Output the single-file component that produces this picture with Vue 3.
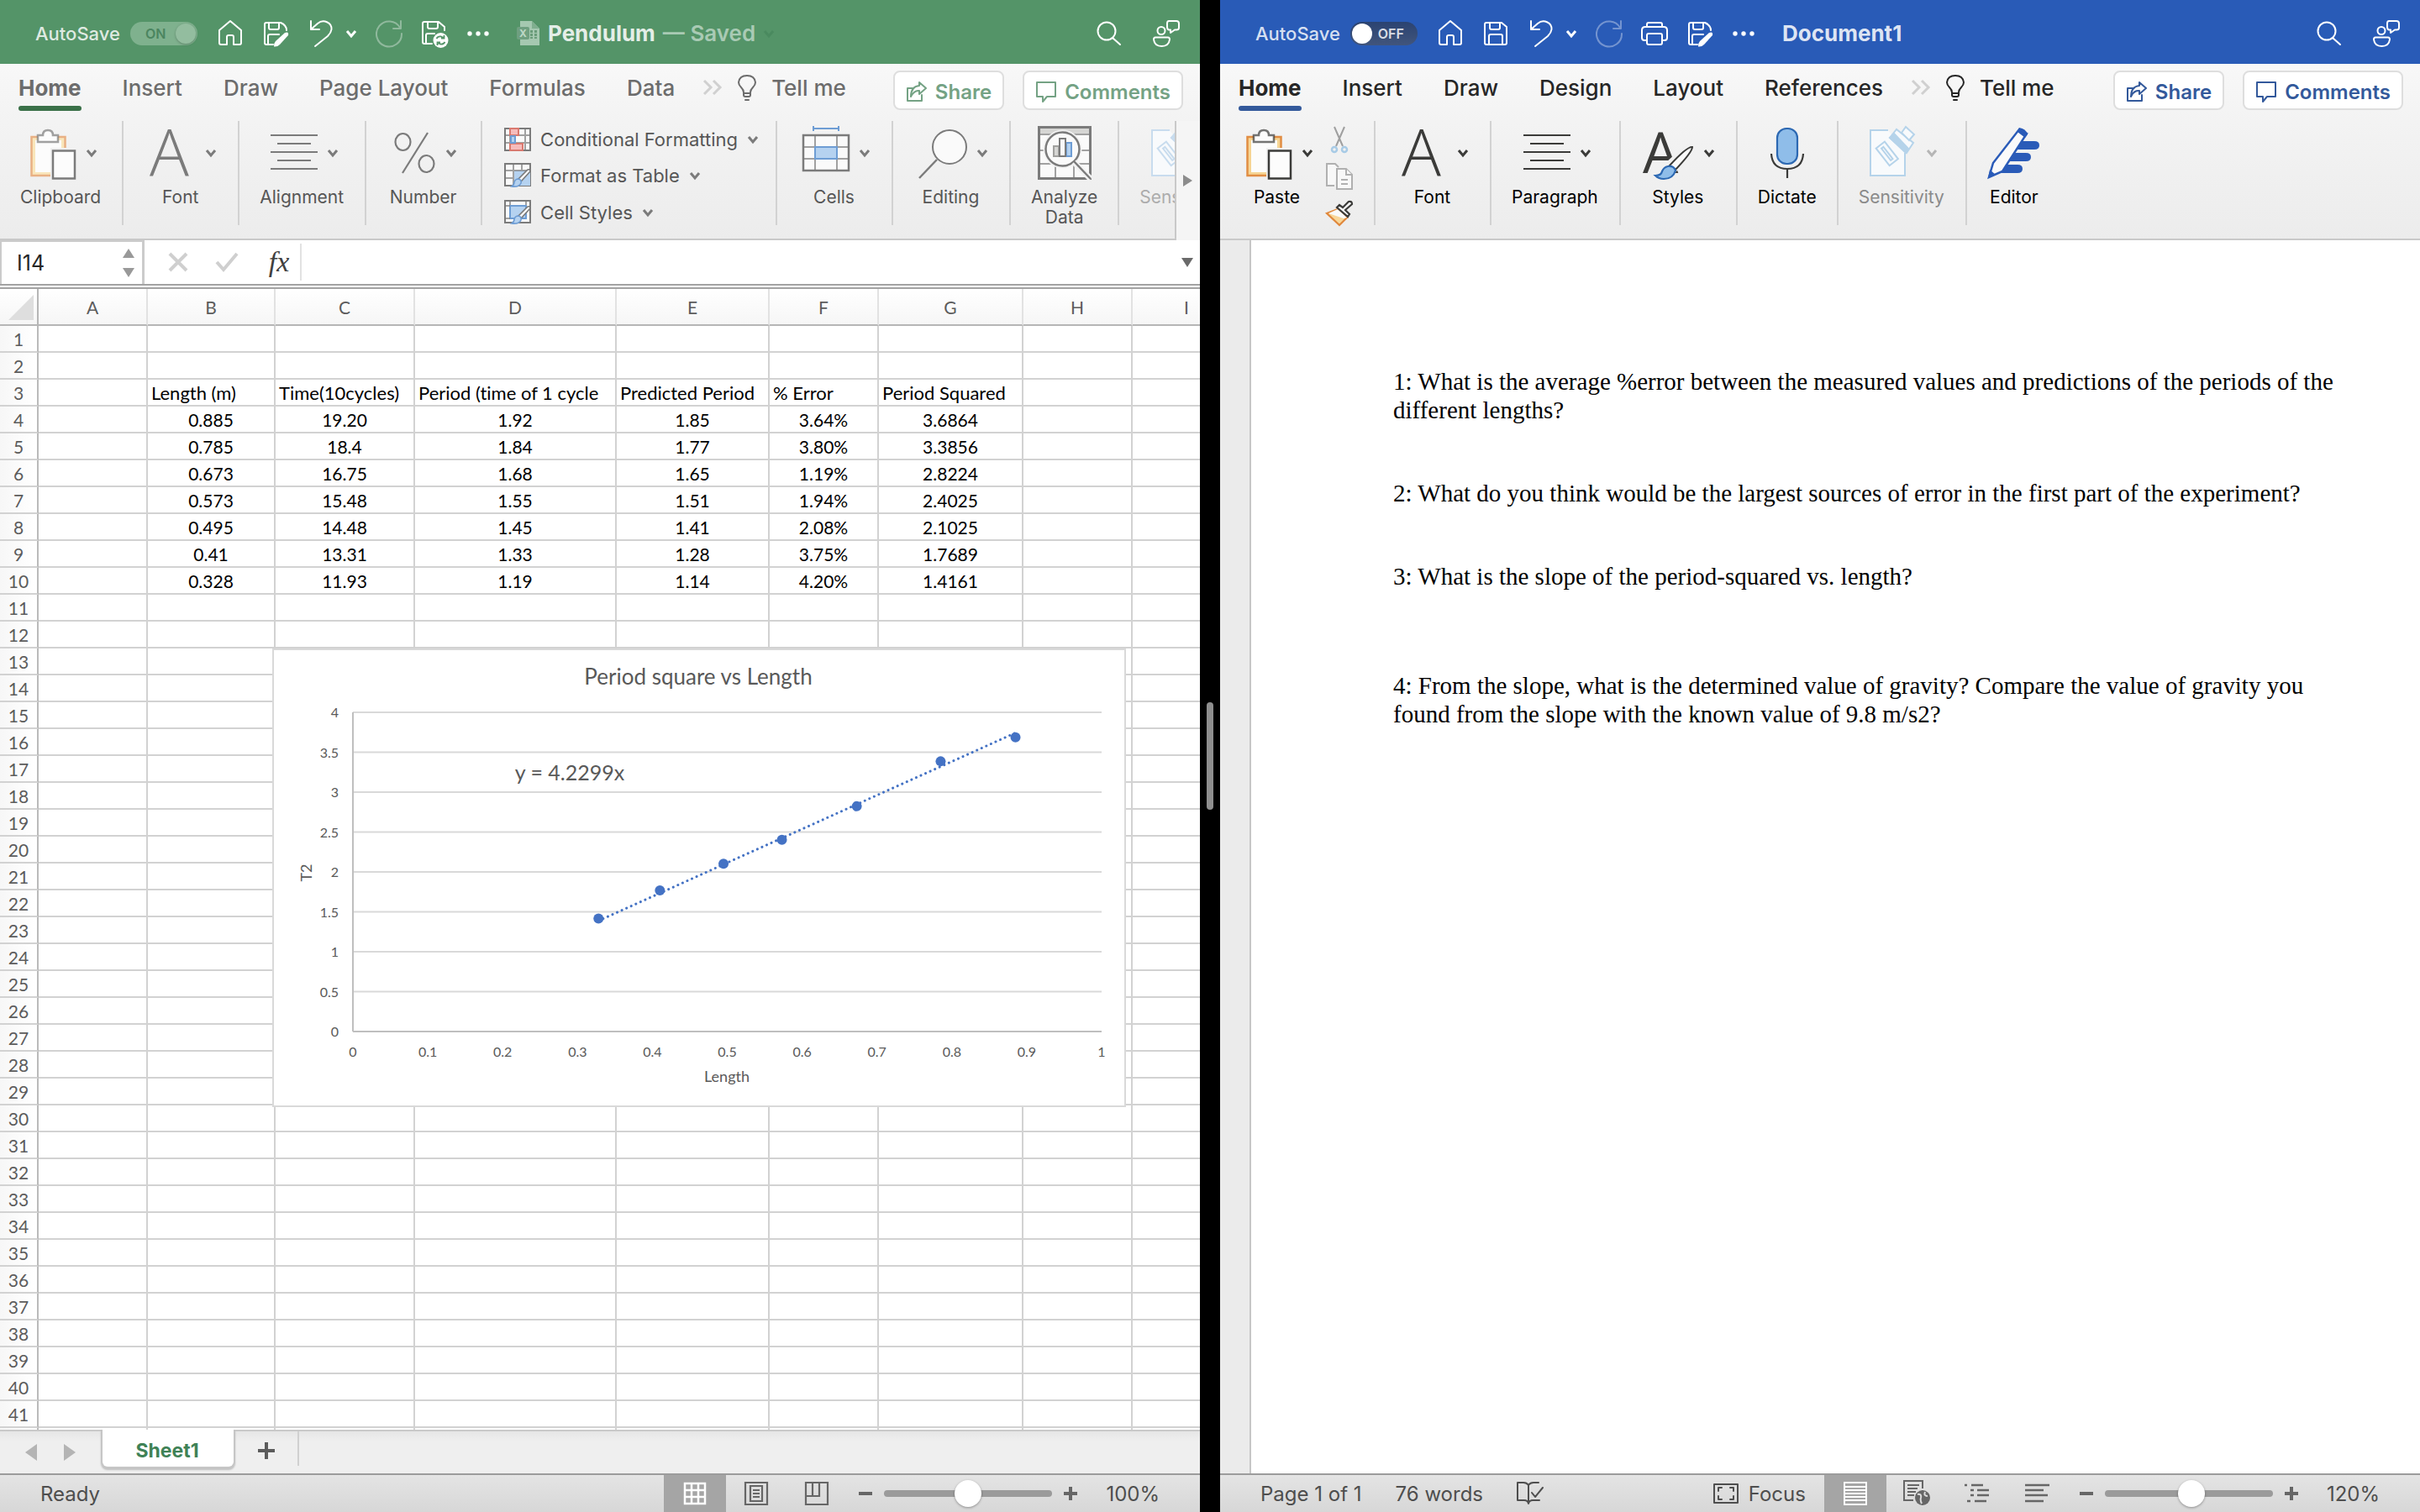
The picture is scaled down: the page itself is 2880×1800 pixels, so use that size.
<template>
  <main class="desktop">
    <!-- Spreadsheet window -->
    <section class="window excel">
      <header class="titlebar">
        <label class="autosave">
          <span>AutoSave</span>
          <input v-model="excelAutoSave" type="checkbox" role="switch">
          <span class="track on"><b>ON</b><i class="knob" /></span>
        </label>
        <div class="quick-tools">
          <button aria-label="Home"><Icon name="home" /></button>
          <button aria-label="Save as"><Icon name="saveEdit" /></button>
          <span class="undo-group">
            <button aria-label="Undo"><Icon name="undo" /></button>
            <button aria-label="Undo history"><Icon name="chevron" /></button>
          </span>
          <button class="faded" aria-label="Redo"><Icon name="redo" /></button>
          <button aria-label="Save and sync"><Icon name="saveSync" /></button>
          <button aria-label="More"><Icon name="dots" /></button>
        </div>
        <h1 class="doc-title">
          <Icon name="excelDoc" class="doc-icon" />
          <span>Pendulum</span>
          <span class="saved">— Saved</span>
          <Icon name="chevron" class="title-chevron" />
        </h1>
        <div class="title-actions">
          <button aria-label="Search"><Icon name="search" /></button>
          <button aria-label="Presence"><Icon name="presence" /></button>
        </div>
      </header>

      <nav class="tabs">
        <button v-for="tab in excelTabs" :key="tab" class="tab" :class="{ active: tab === 'Home' }">{{ tab }}</button>
        <button class="more-tabs" aria-label="More tabs"><Icon name="doubleChevron" /></button>
        <button class="tell-me"><Icon name="bulb" />Tell me</button>
        <div class="tab-actions">
          <button class="pill"><Icon name="share" />Share</button>
          <button class="pill"><Icon name="comment" />Comments</button>
        </div>
      </nav>

      <div class="ribbon">
        <div class="groups">
          <div v-for="g in excelGroupsLeft" :key="g.label" class="group">
            <button class="big">
              <span class="big-icon with-chevron"><Icon :name="g.icon" /><Icon name="chevron" /></span>
              <span class="big-label">{{ g.label }}</span>
            </button>
          </div>
          <div class="group commands">
            <button v-for="c in styleCommands" :key="c.label" class="command">
              <Icon :name="c.icon" />{{ c.label }}<Icon name="chevron" />
            </button>
          </div>
          <div v-for="g in excelGroupsRight" :key="g.label" class="group" :class="{ disabled: g.disabled, plain: !g.menu }">
            <button class="big" :disabled="g.disabled">
              <span class="big-icon" :class="{ 'with-chevron': g.menu }">
                <Icon :name="g.icon" /><Icon v-if="g.menu" name="chevron" />
              </span>
              <span class="big-label">{{ g.label }}</span>
            </button>
          </div>
        </div>
        <button class="ribbon-scroll" aria-label="Scroll ribbon"><Icon name="arrowRight" /></button>
      </div>

      <div class="formula-bar">
        <div class="name-box">
          <input v-model="cellName" aria-label="Name box">
          <span class="stepper">
            <button aria-label="Previous"><Icon name="stepUp" /></button>
            <button aria-label="Next"><Icon name="stepDown" /></button>
          </span>
        </div>
        <button class="formula-btn" aria-label="Cancel"><Icon name="cross" /></button>
        <button class="formula-btn" aria-label="Enter"><Icon name="check" /></button>
        <button class="fx" aria-label="Insert function">fx</button>
        <input class="formula-input" aria-label="Formula">
        <button class="expand" aria-label="Expand formula bar"><Icon name="stepDown" /></button>
      </div>

      <div class="sheet">
        <table class="grid">
          <colgroup>
            <col class="row-head-col">
            <col v-for="c in columns" :key="c.name" :style="{ width: c.width + 'px' }">
          </colgroup>
          <thead>
            <tr>
              <th class="corner"><Icon name="corner" /></th>
              <th v-for="c in columns" :key="c.name">{{ c.name }}</th>
            </tr>
          </thead>
          <tbody>
            <tr v-for="row in 41" :key="row">
              <th>{{ row }}</th>
              <td v-for="(c, i) in columns" :key="c.name" :class="{ text: row === 3 }">{{ cellText(row, i) }}</td>
            </tr>
            <tr>
              <th />
              <td v-for="c in columns" :key="c.name" />
            </tr>
          </tbody>
        </table>

        <figure class="chart">
          <svg width="1014" height="544" viewBox="0 0 1014 544" font-family="Lato, sans-serif" fill="#595959">
            <text x="506" y="42" font-size="26" text-anchor="middle">Period square vs Length</text>
            <g v-for="t in yTicks" :key="'y' + t">
              <line x1="95" x2="986" :y1="py(t)" :y2="py(t)" :stroke="t ? '#d9d9d9' : '#bfbfbf'" stroke-width="2" />
              <text x="78" :y="py(t) + 6" font-size="16" text-anchor="end">{{ t }}</text>
            </g>
            <line x1="95" x2="95" y1="75" y2="455" stroke="#bfbfbf" stroke-width="2" />
            <text v-for="t in xTicks" :key="'x' + t" :x="px(t)" y="485" font-size="16" text-anchor="middle">{{ t }}</text>
            <line
              :x1="px(0.328)" :y1="py(0.328 * 4.2299)" :x2="px(0.885)" :y2="py(0.885 * 4.2299)"
              stroke="#4472c4" stroke-width="3" stroke-linecap="round" stroke-dasharray="0.1 6"
            />
            <circle v-for="p in points" :key="p[0]" :cx="px(p[0])" :cy="py(p[1])" r="6" fill="#4472c4" />
            <text x="353" y="156" font-size="25" text-anchor="middle">y = 4.2299x</text>
            <text x="540" y="515" font-size="18" text-anchor="middle">Length</text>
            <text transform="translate(46 266) rotate(-90)" font-size="18" text-anchor="middle">T2</text>
          </svg>
        </figure>
      </div>

      <div class="sheet-tabs">
        <button class="sheet-arrow" aria-label="Previous sheet"><Icon name="sheetPrev" /></button>
        <button class="sheet-arrow" aria-label="Next sheet"><Icon name="sheetNext" /></button>
        <button class="sheet-tab">Sheet1</button>
        <button class="add-sheet" aria-label="Add sheet"><Icon name="addSheet" /></button>
      </div>

      <footer class="statusbar">
        <span>Ready</span>
        <div class="status-right">
          <button class="view active" aria-label="Normal view"><Icon name="viewNormal" /></button>
          <button class="view" aria-label="Page layout view"><Icon name="viewPage" /></button>
          <button class="view" aria-label="Page break view"><Icon name="viewBreak" /></button>
          <button class="zoom-btn" aria-label="Zoom out"><Icon name="minus" /></button>
          <input v-model="excelZoom" class="slider" type="range" min="0" max="100" aria-label="Zoom">
          <button class="zoom-btn" aria-label="Zoom in"><Icon name="plus" /></button>
          <output>100%</output>
        </div>
      </footer>
    </section>

    <div class="splitter"><span class="handle" /></div>

    <!-- Document window -->
    <section class="window word">
      <header class="titlebar">
        <label class="autosave">
          <span>AutoSave</span>
          <input v-model="wordAutoSave" type="checkbox" role="switch">
          <span class="track"><i class="knob" /><b>OFF</b></span>
        </label>
        <div class="quick-tools">
          <button aria-label="Home"><Icon name="home" /></button>
          <button aria-label="Save"><Icon name="save" /></button>
          <span class="undo-group">
            <button aria-label="Undo"><Icon name="undo" /></button>
            <button aria-label="Undo history"><Icon name="chevron" /></button>
          </span>
          <button class="faded" aria-label="Redo"><Icon name="redo" /></button>
          <button aria-label="Print"><Icon name="print" /></button>
          <button aria-label="Save as"><Icon name="saveEdit" /></button>
          <button aria-label="More"><Icon name="dots" /></button>
        </div>
        <h1 class="doc-title"><span>Document1</span></h1>
        <div class="title-actions">
          <button aria-label="Search"><Icon name="search" /></button>
          <button aria-label="Presence"><Icon name="presence" /></button>
        </div>
      </header>

      <nav class="tabs">
        <button v-for="tab in wordTabs" :key="tab" class="tab" :class="{ active: tab === 'Home' }">{{ tab }}</button>
        <button class="more-tabs" aria-label="More tabs"><Icon name="doubleChevron" /></button>
        <button class="tell-me"><Icon name="bulb" />Tell me</button>
        <div class="tab-actions">
          <button class="pill"><Icon name="share" />Share</button>
          <button class="pill"><Icon name="comment" />Comments</button>
        </div>
      </nav>

      <div class="ribbon">
        <div class="groups">
          <div class="group paste">
            <button class="big">
              <span class="big-icon with-chevron"><Icon name="clipboard" /><Icon name="chevron" /></span>
              <span class="big-label">Paste</span>
            </button>
            <div class="mini-tools">
              <button aria-label="Cut"><Icon name="cut" /></button>
              <button aria-label="Copy"><Icon name="copy" /></button>
              <button aria-label="Format painter"><Icon name="painter" /></button>
            </div>
          </div>
          <div v-for="g in wordGroups" :key="g.label" class="group" :class="{ disabled: g.disabled, plain: !g.menu }">
            <button class="big" :disabled="g.disabled">
              <span class="big-icon" :class="{ 'with-chevron': g.menu }">
                <Icon :name="g.icon" /><Icon v-if="g.menu" name="chevron" />
              </span>
              <span class="big-label">{{ g.label }}</span>
            </button>
          </div>
        </div>
      </div>

      <div class="canvas">
        <article class="page">
          <p>1: What is the average %error between the measured values and predictions of the periods of the different lengths?</p>
          <p>2: What do you think would be the largest sources of error in the first part of the experiment?</p>
          <p>3: What is the slope of the period-squared vs. length?</p>
          <p>4: From the slope, what is the determined value of gravity? Compare the value of gravity you found from the slope with the known value of 9.8 m/s2?</p>
        </article>
      </div>

      <footer class="statusbar">
        <span>Page 1 of 1</span>
        <span>76 words</span>
        <button class="proof" aria-label="Proofing"><Icon name="proof" /></button>
        <div class="status-right">
          <button class="focus"><Icon name="focus" />Focus</button>
          <button class="view active" aria-label="Print layout"><Icon name="viewPrint" /></button>
          <button class="view" aria-label="Web layout"><Icon name="viewWeb" /></button>
          <button class="view" aria-label="Outline"><Icon name="viewOutline" /></button>
          <button class="view" aria-label="Draft"><Icon name="viewDraft" /></button>
          <button class="zoom-btn" aria-label="Zoom out"><Icon name="minus" /></button>
          <input v-model="wordZoom" class="slider" type="range" min="0" max="100" aria-label="Zoom">
          <button class="zoom-btn" aria-label="Zoom in"><Icon name="plus" /></button>
          <output>120%</output>
        </div>
      </footer>
    </section>
  </main>
</template>

<script setup>
import { h, ref } from 'vue'

const excelAutoSave = ref(true)
const wordAutoSave = ref(false)
const cellName = ref('I14')
const excelZoom = ref(50)
const wordZoom = ref(52)

const excelTabs = ['Home', 'Insert', 'Draw', 'Page Layout', 'Formulas', 'Data']
const wordTabs = ['Home', 'Insert', 'Draw', 'Design', 'Layout', 'References']

const excelGroupsLeft = [
  { label: 'Clipboard', icon: 'clipboard' },
  { label: 'Font', icon: 'letterA' },
  { label: 'Alignment', icon: 'align' },
  { label: 'Number', icon: 'percent' }
]

const styleCommands = [
  { label: 'Conditional Formatting', icon: 'condFormat' },
  { label: 'Format as Table', icon: 'tableFormat' },
  { label: 'Cell Styles', icon: 'cellStyles' }
]

const excelGroupsRight = [
  { label: 'Cells', icon: 'cells', menu: true },
  { label: 'Editing', icon: 'editing', menu: true },
  { label: 'Analyze\nData', icon: 'analyze' },
  { label: 'Sensitivity', icon: 'sensitivity', menu: true, disabled: true }
]

const wordGroups = [
  { label: 'Font', icon: 'letterA', menu: true },
  { label: 'Paragraph', icon: 'align', menu: true },
  { label: 'Styles', icon: 'styles', menu: true },
  { label: 'Dictate', icon: 'mic' },
  { label: 'Sensitivity', icon: 'sensitivity', menu: true, disabled: true },
  { label: 'Editor', icon: 'editor' }
]

const columns = [
  { name: 'A', width: 130 },
  { name: 'B', width: 152 },
  { name: 'C', width: 166 },
  { name: 'D', width: 240 },
  { name: 'E', width: 182 },
  { name: 'F', width: 130 },
  { name: 'G', width: 172 },
  { name: 'H', width: 130 },
  { name: 'I', width: 130 }
]

// sheet rows, first one lands on row 3, first column on B
const cells = [
  ['Length (m)', 'Time(10cycles)', 'Period (time of 1 cycle', 'Predicted Period', '% Error', 'Period Squared'],
  ['0.885', '19.20', '1.92', '1.85', '3.64%', '3.6864'],
  ['0.785', '18.4', '1.84', '1.77', '3.80%', '3.3856'],
  ['0.673', '16.75', '1.68', '1.65', '1.19%', '2.8224'],
  ['0.573', '15.48', '1.55', '1.51', '1.94%', '2.4025'],
  ['0.495', '14.48', '1.45', '1.41', '2.08%', '2.1025'],
  ['0.41', '13.31', '1.33', '1.28', '3.75%', '1.7689'],
  ['0.328', '11.93', '1.19', '1.14', '4.20%', '1.4161']
]

function cellText(row, col) {
  const line = cells[row - 3]
  return line ? line[col - 1] : ''
}

const points = cells.slice(1).map(r => [Number(r[0]), Number(r[5])])
const yTicks = [0, 0.5, 1, 1.5, 2, 2.5, 3, 3.5, 4]
const xTicks = [0, 0.1, 0.2, 0.3, 0.4, 0.5, 0.6, 0.7, 0.8, 0.9, 1]
const px = v => 95 + v * 891
const py = v => 455 - v * 95

const line = 'fill="none" stroke="currentColor" stroke-width="2" stroke-linejoin="round" stroke-linecap="round"'
const brush = '<path d="M31 10 L20 22 L17 19 L28 8 Q31 7 31 10Z" fill="#fafafa" stroke="currentColor" stroke-width="1.6"/><path d="M17 19 Q21 20 20 24 Q18 29 9 28 Q12 26 12 23 Q13 19 17 19Z" fill="var(--blue-fill)" stroke="var(--blue)" stroke-width="1.6"/>'

const icons = {
  home: [32, 32, `<path ${line} d="M16 1 L3 12 V27 Q3 29 5 29 H12 V20 Q12 18 14 18 H18 Q20 18 20 20 V29 H27 Q29 29 29 27 V12 Z"/>`],
  save: [32, 32, `<path ${line} d="M5 3 H23 L29 8 V27 Q29 29 27 29 H5 Q3 29 3 27 V5 Q3 3 5 3 Z M9 3 V9 Q9 11 11 11 H19 Q21 11 21 9 V3 M8 29 V19 Q8 17 10 17 H22 Q24 17 24 19 V29"/>`],
  saveEdit: [32, 32, `<path ${line} d="M13 29 H5 Q3 29 3 27 V5 Q3 3 5 3 H22 Q29 6 29 12 M8 3 V9 Q8 11 10 11 H18 Q20 11 20 9 V3 M7 29 V19 Q7 17 9 17 H20"/><path fill="currentColor" d="M27 15 Q32 13 31 18 L21 29 Q18 32 14 31.500 Q14 27 16 25 Z"/>`],
  saveSync: [32, 32, `<path ${line} d="M13 28 H4 Q2 28 2 26 V4 Q2 2 4 2 H21 L28 8 V12 M8 2 V8 Q8 10 10 10 H18 Q20 10 20 8 V2 M6 28 V18 Q6 16 8 16 H16"/><circle cx="23.500" cy="24" r="9" fill="currentColor"/><path d="M18.500 22 Q20 19 24 19.500 L27 21 M27.500 18 V21.500 H24 M28.500 26 Q27 29 23 28.500 L20 27 M19.500 30 V26.500 H23" fill="none" stroke="#549468" stroke-width="1.8"/>`],
  undo: [32, 32, `<path ${line} d="M4 1 V11 H14 M4 11 L12 4 C19 -2 29 3 28.500 11 C28 15 26 17 24 19 L9 31"/>`],
  redo: [32, 32, `<path ${line} d="M30 1 V10 H21 M29 9 A15 15 0 1 0 31 16"/>`],
  chevron: [14, 10, '<path d="M2 2 L7 8 L12 2" fill="none" stroke="currentColor" stroke-width="3"/>'],
  dots: [32, 32, '<g fill="currentColor"><circle cx="4" cy="16" r="2.7"/><circle cx="14" cy="16" r="2.7"/><circle cx="24" cy="16" r="2.7"/></g>'],
  print: [32, 32, `<path ${line} d="M7 8 V5 Q7 3 9 3 H23 Q25 3 25 5 V8 M7 24 H4 Q1 24 1 21 V12 Q1 8 5 8 H27 Q31 8 31 12 V21 Q31 24 28 24 H25 M9 16 H23 Q25 16 25 18 V27 Q25 29 23 29 H9 Q7 29 7 27 V18 Q7 16 9 16Z"/>`],
  excelDoc: [28, 32, '<path d="M4 1 H18 L27 10 V30 H4Z" fill="#a5c8b0"/><path d="M18 1 V10 H27Z" fill="#7fae8e"/><path d="M16 12h3v3h-3zM21 12h3v3h-3zM16 16h3v3h-3zM21 16h3v3h-3zM16 20h3v2h-3zM21 20h3v2h-3z" fill="#6a9c7a"/><rect x="0" y="8" width="15" height="15" rx="2" fill="#6f9f80"/><text x="7.500" y="20" font-size="12" font-weight="700" text-anchor="middle" fill="#bdd8c6">X</text>'],
  search: [32, 32, `<circle ${line} cx="13" cy="13" r="10.5"/><path ${line} d="M20 21 L29 29"/>`],
  presence: [32, 32, `<circle ${line} cx="10" cy="12.500" r="4.500"/><path ${line} d="M3 20.500 H18 Q20 20.500 20 23 Q19 31 10.500 31 Q2 31 1 23 Q1 20.500 3 20.500Z M19 1 H28 Q31 1 31 4 V9 Q31 11.500 28 11.500 H26 L21 15 V11.500 H19 Q17 11 17 8 V4 Q17 1 19 1Z"/>`],
  doubleChevron: [24, 20, '<path d="M2 2 L10 10 L2 18 M13 2 L21 10 L13 18" fill="none" stroke="#d0d0d0" stroke-width="3"/>'],
  bulb: [22, 32, `<path ${line} d="M7 24 V21 Q7 18 4 15 Q1 12 1 9 Q2 1 11 1 Q20 1 21 9 Q21 12 18 15 Q15 18 15 21 V24 Q15 26 13 26 H9 Q7 26 7 24Z M7 22 H15 M9 30 H13"/>`],
  share: [26, 26, `<path ${line} d="M8 9 H2 V24 H19 V17 M16 2 L24 9 L16 16 V12 Q10 11 6 19 Q6 7 16 6Z"/>`],
  comment: [26, 26, `<path ${line} d="M2 2 H24 V19 H14 L9 25 V19 H2Z"/>`],
  clipboard: [56, 64, '<rect x="2.500" y="13" width="40" height="46" fill="var(--sand)" stroke="var(--orange)" stroke-width="2.500"/><rect x="7" y="17" width="31" height="38" fill="#fcfcfc"/><path d="M10 19 V11 H16 Q16 5 22 5 Q28 5 28 11 H34 V19Z" fill="#fcfcfc" stroke="currentColor" stroke-opacity="0.7" stroke-width="2.500"/><path d="M25 26 H44 V64 H25Z" fill="#f1f1f1"/><rect x="28" y="29.500" width="26" height="33" fill="#fcfcfc" stroke="currentColor" stroke-width="2.500"/>'],
  letterA: [56, 64, '<text x="1" y="60" font-family="Open Sans, sans-serif" font-weight="300" font-size="78" fill="currentColor">A</text>'],
  align: [56, 64, '<path d="M0 11 H56 M8 21 H48 M0 31 H56 M8 41 H48 M0 51 H56" stroke="currentColor" stroke-width="2"/>'],
  percent: [50, 64, '<g fill="none" stroke="currentColor" stroke-width="2.200"><ellipse cx="10.500" cy="19" rx="9" ry="10"/><ellipse cx="38.500" cy="45" rx="9" ry="10"/><path d="M40 8 L10 56"/></g>'],
  cells: [56, 64, '<rect x="1" y="11" width="54" height="42" fill="#fafafa" stroke="currentColor" stroke-width="2.500"/><path d="M15 11 V53 M41 11 V53 M1 25 H55 M1 39 H55" stroke="currentColor" stroke-opacity="0.7" stroke-width="2"/><rect x="15" y="25" width="26" height="14" fill="var(--blue-fill)" stroke="var(--blue)" stroke-width="2"/><path d="M13 3 H43 M13 0 V6 M43 0 V6" stroke="var(--blue)" stroke-width="2"/>'],
  editing: [58, 64, '<circle cx="37" cy="25" r="20" fill="#fafafa" stroke="currentColor" stroke-width="2"/><path d="M22 40 L1 62" stroke="currentColor" stroke-width="2.500"/>'],
  analyze: [64, 64, '<rect x="1.500" y="1.500" width="61" height="61" fill="#fafafa" stroke="currentColor" stroke-width="3"/><rect x="3" y="3" width="58" height="6" fill="#d6d6d4"/><path d="M2 10 H62 M2 29 H62 M2 45 H62 M21 45 V62 M43 45 V62" stroke="currentColor" stroke-opacity="0.7" stroke-width="2"/><circle cx="29.500" cy="27.500" r="23" fill="#f3f3f3"/><circle cx="29.500" cy="27.500" r="20" fill="#fafafa" stroke="currentColor" stroke-width="2.500"/><path d="M43 43 L63 63" stroke="#f3f3f3" stroke-width="7"/><path d="M43 42 L63 63" stroke="currentColor" stroke-width="2.500"/><rect x="19" y="24" width="6" height="12" fill="#d6d6d4" stroke="#a0a09e" stroke-width="2"/><rect x="34" y="20" width="6" height="16" fill="var(--blue-fill)" stroke="var(--blue)" stroke-width="2"/><rect x="26" y="15" width="7" height="21" fill="#fafafa" stroke="currentColor" stroke-width="2"/>'],
  sensitivity: [56, 64, '<g fill="#f8fafc" stroke="var(--pale-blue)" stroke-width="2"><path d="M22 5 H1 V59 H42 V32"/><g transform="rotate(-38 21 34)"><rect x="15" y="20" width="13" height="26"/><path d="M20 24 H23 V42 H20Z"/></g><path d="M24 14 L32 4 L52 20 L44 32 Z"/><path d="M24 14 L29 9 L46 27 L43 32Z" fill="var(--pale-blue)"/><path d="M38 8 L43 1 L53 10 L47 17Z"/></g>'],
  condFormat: [32, 28, '<rect x="1" y="1" width="30" height="26" fill="#fafafa" stroke="currentColor" stroke-width="2"/><path d="M1 9 H31 M1 18 H31 M7 1 V27 M25 1 V27" stroke="currentColor" stroke-opacity="0.7" stroke-width="2"/><g fill="#f6bcbc" stroke="#d9796f" stroke-width="2"><rect x="7" y="1" width="10" height="8"/><rect x="7" y="19" width="15" height="8"/></g><rect x="8" y="10" width="5" height="8" fill="#b5d2f0" stroke="#6e9dd4" stroke-width="2"/>'],
  tableFormat: [32, 30, `<rect x="1" y="1" width="30" height="26" fill="#fafafa" stroke="currentColor" stroke-width="2"/><rect x="12" y="9" width="19" height="18" fill="var(--blue-fill)"/><path d="M1 9 H31 M1 18 H12 M11 1 V27 M21 1 V9" stroke="currentColor" stroke-opacity="0.7" stroke-width="2"/>${brush}`],
  cellStyles: [32, 30, `<rect x="1" y="1" width="30" height="26" fill="#fafafa" stroke="currentColor" stroke-width="2"/><rect x="7" y="7" width="19" height="15" fill="var(--blue-fill)" stroke="var(--blue)" stroke-width="2"/><path d="M1 7 H7 M1 22 H7 M7 1 V6 M26 1 V6" stroke="currentColor" stroke-opacity="0.7" stroke-width="2"/>${brush}`],
  cut: [32, 32, '<path d="M10 1 L20 24 M22 1 L12 24" stroke="#9f9f9f" stroke-width="2"/><g fill="none" stroke="#a8cbe6" stroke-width="2.500"><circle cx="10" cy="28" r="3"/><circle cx="22" cy="28" r="3"/></g>'],
  copy: [32, 32, '<g fill="#f8f8f8" stroke="#b0b0b0" stroke-width="2"><path d="M10 27 H1 V1 H11 L15 5"/><path d="M13 7 H24 L31 14 V31 H13Z"/><path d="M24 7 V14 H31 M18 20 H26 M18 25 H26"/></g>'],
  painter: [32, 32, '<path d="M1 16 L14 11 L25 21 L16 30Z" fill="#f8d79a" stroke="#e0883c" stroke-width="2.200"/><path d="M3 16 L14 11 L25 21 L21 22Z" fill="#fafafa"/><path d="M13 9 L26 20 L28 17 L23 12 L31 5 Q31 1 27 2 L20 9 L16 6Z" fill="#fafafa" stroke="currentColor" stroke-width="2.200"/>'],
  styles: [57, 64, '<g transform="translate(-3 0)"><text x="-1" y="56" font-family="Open Sans, sans-serif" font-weight="400" font-size="67" fill="currentColor">A</text><path d="M59 25 L36 52 L29 46 L51 26 Q57 22 59 25Z" fill="#fafafa" stroke="#f1f1f1" stroke-width="7"/><path d="M58 25 Q58 31 37 53 L31 47 Q52 24 58 25Z" fill="#fafafa" stroke="currentColor" stroke-width="2"/><path d="M29 48 Q36 47 38 53 Q35 63 24 63 Q18 63 14 59 Q21 59 22 54 Q24 49 29 48Z" fill="var(--blue-fill)" stroke="var(--blue)" stroke-width="2.200"/></g>'],
  mic: [40, 64, '<rect x="8" y="3" width="24" height="42" rx="11" fill="var(--blue-fill)" stroke="var(--blue)" stroke-width="2.200"/><path d="M1 33 Q2 51 20 51 Q38 51 39 33 M20 51 V62" fill="none" stroke="currentColor" stroke-width="2.200"/>'],
  editor: [64, 64, '<g fill="#2a5bb8"><path d="M32 18 H56 Q62 18 62 23 Q62 28 56 28 H32Z"/><path d="M26 32 H46 Q52 32 52 37 Q52 42 46 42 H26Z"/><path d="M14 46 H36 Q42 46 42 51 Q42 56 36 56 H12Z"/></g><path d="M38 4 L47 9 L18 54 L2 61 L7 44Z" fill="#fafafa" stroke="#2a5bb8" stroke-width="2.500"/><path d="M38 2 Q46 3 48 10 L45 14 L36 7Z M1 62 L3 52 L10 58Z" fill="#2a5bb8"/>'],
  arrowRight: [12, 14, '<path d="M0 0 L11 7 L0 14Z" fill="#8c8c8c"/>'],
  stepUp: [14, 11, '<path d="M7 0 L14 11 H0Z" fill="currentColor"/>'],
  stepDown: [14, 11, '<path d="M7 11 L14 0 H0Z" fill="currentColor"/>'],
  cross: [24, 24, '<path d="M2 2 L22 22 M22 2 L2 22" stroke="#cfcfcf" stroke-width="4"/>'],
  check: [28, 24, '<path d="M2 12 L10 21 L26 2" fill="none" stroke="#cfcfcf" stroke-width="4"/>'],
  corner: [30, 30, '<path d="M30 0 V30 H0Z" fill="#dedede"/>'],
  sheetPrev: [14, 20, '<path d="M14 0 V20 L0 10Z" fill="#b4b4b4"/>'],
  sheetNext: [14, 20, '<path d="M0 0 V20 L14 10Z" fill="#b4b4b4"/>'],
  addSheet: [20, 20, '<path d="M10 0 V20 M0 10 H20" stroke="#5c5c5c" stroke-width="4"/>'],
  viewNormal: [28, 28, '<path d="M2 2 H26 V26 H2Z M10 2 V26 M18 2 V26 M2 10 H26 M2 18 H26" fill="none" stroke="currentColor" stroke-width="2.500"/>'],
  viewPage: [28, 28, '<path d="M1 1 H27 V27 H1Z M7 5 H21 V23 H7Z M10 10 H18 M10 14 H18 M10 18 H18" fill="none" stroke="currentColor" stroke-width="2.200"/>'],
  viewBreak: [28, 28, '<path d="M1 1 H27 V27 H1Z M9 1 V17 M1 17 H17 V1" fill="none" stroke="currentColor" stroke-width="2.200"/>'],
  viewPrint: [28, 28, '<path d="M1 1 H27 V27 H1Z M1 6 H27 M1 10 H27 M1 14 H27 M1 18 H27 M1 22 H27" fill="none" stroke="currentColor" stroke-width="2"/>'],
  viewWeb: [32, 32, '<path d="M12 24 H1 V1 H23 V10 M5 6 H19 M5 10 H17 M5 14 H15 M5 18 H13" fill="none" stroke="currentColor" stroke-width="2"/><circle cx="23" cy="21" r="9" fill="currentColor"/><path d="M17 17 Q22 16 21 21 Q20 24 22 28 M26 14 Q24 19 29 19" fill="none" stroke="#dcdcdc" stroke-width="2"/>'],
  viewOutline: [30, 26, '<path d="M0 3 H3 M8 3 H22 M7 9 H11 M15 9 H29 M7 15 H11 M15 15 H29 M3 22 H7 M12 22 H26" stroke="currentColor" stroke-width="2.500"/>'],
  viewDraft: [30, 26, '<path d="M0 3 H29 M0 9 H22 M0 15 H27 M0 22 H22" stroke="currentColor" stroke-width="2.500"/>'],
  minus: [16, 16, '<path d="M0 8 H16" stroke="currentColor" stroke-width="4"/>'],
  plus: [16, 16, '<path d="M0 8 H16 M8 0 V16" stroke="currentColor" stroke-width="4"/>'],
  proof: [32, 28, `<path ${line} d="M14 4 Q12 1 8 1 H1 V22 H9 Q13 22 14 26 Q15 22 19 22 H27 M14 4 V26 M14 4 Q16 1 20 1 H26 M18 13 L22 18 L31 7"/>`],
  focus: [30, 24, `<path ${line} d="M1 1 H29 V23 H1Z M6 9 V5 H10 M20 5 H24 V9 M24 15 V19 H20 M10 19 H6 V15"/>`]
}

const Icon = (props) => {
  const [w, hgt, body] = icons[props.name]
  return h('svg', { width: w, height: hgt, viewBox: `0 0 ${w} ${hgt}`, 'aria-hidden': 'true', innerHTML: body })
}
Icon.props = ['name']
</script>

<style>
body {
  margin: 0;
  background: #000;
}
</style>

<style scoped>
.desktop {
  display: grid;
  grid-template-columns: minmax(0, 1fr) 24px minmax(0, 1fr);
  height: 100vh;
  font-family: Inter, "Liberation Sans", sans-serif;
  font-size: 22px;
  overflow: hidden;
}

button {
  display: flex;
  align-items: center;
  justify-content: center;
  padding: 0;
  border: none;
  background: none;
  color: inherit;
  font: inherit;
  white-space: nowrap;
  cursor: pointer;
}

svg {
  display: block;
  flex-shrink: 0;
  overflow: visible;
}

input {
  min-width: 0;
  border: none;
  outline: none;
  font: inherit;
}

.window {
  display: flex;
  flex-direction: column;
  min-height: 0;
  background: #fff;
}

.excel {
  --brand: #549468;
  --underline: #3a7048;
  --pill: #74a284;
  --ink: #6c6c6c;
  --icon: #7b7b7b;
  --label: #565656;
  --sand: #f9e6bb;
  --orange: #e9b184;
  --blue: #6e9dd4;
  --blue-fill: #b5d2f0;
  --pale-blue: #c8dcee;
}

.word {
  --brand: #295bb7;
  --underline: #33599b;
  --pill: #33599b;
  --ink: #262626;
  --icon: #3b3b39;
  --label: #000;
  --sand: #f6d594;
  --orange: #e18d43;
  --blue: #2c68b2;
  --blue-fill: #8fbde9;
  --pale-blue: #b5d3ea;
}

/* title bar */
.titlebar {
  display: flex;
  align-items: center;
  height: 76px;
  padding: 4px 24px 0 42px;
  box-sizing: border-box;
  background: var(--brand);
  color: #fff;
}

.autosave {
  position: relative;
  display: flex;
  align-items: center;
  gap: 12px;
  width: 216px;
  font-weight: 500;
  font-size: 22px;
  color: rgba(255, 255, 255, 0.82);
}

.autosave input {
  position: absolute;
  inset: 0;
  margin: 0;
  opacity: 0;
}

.track {
  display: flex;
  align-items: center;
  justify-content: space-between;
  width: 80px;
  height: 28px;
  padding: 0 2px 0 12px;
  box-sizing: border-box;
  border-radius: 14px;
  background: linear-gradient(#2b4371, #41557c);
  font-size: 16px;
}

.track b {
  font-weight: 600;
}

.track.on {
  padding: 0 2px 0 18px;
  background: #7fb18e;
  color: #4b8560;
}

.word .track {
  padding: 0 16px 0 2px;
}

.knob {
  width: 24px;
  height: 24px;
  border-radius: 50%;
  background: #fff;
}

.track.on .knob {
  background: #93bd9f;
  box-shadow: 0 1px 3px rgba(0, 0, 0, 0.25);
}

.quick-tools {
  display: flex;
  align-items: center;
  gap: 22px;
}

.undo-group {
  display: flex;
  align-items: center;
  gap: 13px;
}

.faded {
  opacity: 0.35;
}

.doc-title {
  display: flex;
  align-items: center;
  gap: 9px;
  margin: 0 0 0 28px;
  font-size: 26px;
  font-weight: 700;
  line-height: 32px;
  white-space: nowrap;
  color: rgba(255, 255, 255, 0.86);
}

.saved {
  font-weight: 600;
  color: #a9cab4;
}

.title-chevron {
  color: #4a8a5f;
}

.title-actions {
  display: flex;
  gap: 36px;
  margin-left: auto;
}

/* tabs */
.tabs {
  display: flex;
  align-items: flex-start;
  height: 68px;
  padding: 0 20px 0 22px;
  background: linear-gradient(#f8f8f8, #f3f3f3);
  font-size: 26px;
  color: var(--ink);
}

.tab {
  position: relative;
  margin-right: 49px;
  height: 56px;
  padding-top: 1px;
  font-weight: 500;
}

.tab.active {
  font-weight: 700;
}

.tab.active::after {
  content: "";
  position: absolute;
  inset: auto 0 0;
  height: 6px;
  border-radius: 3px;
  background: var(--underline);
}

.more-tabs {
  height: 56px;
  margin-left: -16px;
}

.tell-me {
  height: 56px;
  gap: 18px;
  margin-left: 18px;
  padding-top: 1px;
  font-weight: 500;
}

.tab-actions {
  display: flex;
  gap: 22px;
  margin: 8px 0 0 auto;
}

.pill {
  gap: 9px;
  height: 47px;
  padding: 3px 13px 0;
  border: 2px solid #dedede;
  border-radius: 8px;
  box-sizing: border-box;
  background: #fff;
  color: var(--pill);
  font-size: 24px;
  font-weight: 600;
}

/* ribbon */
.ribbon {
  display: flex;
  height: 142px;
  box-sizing: border-box;
  background: linear-gradient(#f3f3f3, #ececec);
}

.groups {
  display: flex;
  flex: 1;
  min-width: 0;
  overflow: hidden;
  border-bottom: 2px solid #c9c9c9;
}

.excel .groups {
  border-right: 2px solid #c9c9c9;
}

.group {
  display: flex;
  align-items: flex-start;
  justify-content: center;
  flex-shrink: 0;
  min-width: 138px;
  height: 124px;
  padding: 6px 25px 0 24px;
  box-sizing: border-box;
  border-right: 2px solid #d2d2d2;
}

.group.plain {
  min-width: 0;
  padding: 6px 24px 0;
}

.word .group:last-child {
  border-right: none;
}

.paste {
  gap: 15px;
}

.big {
  flex-direction: column;
  color: var(--icon);
}

.big-icon {
  display: flex;
  align-items: center;
  gap: 11px;
  height: 64px;
}

.with-chevron {
  padding-left: 6px;
}

.big-label {
  margin-top: 9px;
  color: var(--label);
  font-size: 21px;
  line-height: 24px;
  white-space: pre-line;
}

.disabled .big {
  color: #b5b5b5;
}

.disabled .big-label {
  color: #8a8a8a;
}

.excel .disabled .big-label {
  color: #acacac;
}

.mini-tools {
  display: flex;
  flex-direction: column;
  gap: 12px;
  color: var(--icon);
}

.group.commands {
  flex-direction: column;
  justify-content: flex-start;
  gap: 14px;
  padding: 8px 20px 0 26px;
}

.command {
  gap: 11px;
  height: 30px;
  font-size: 22px;
  color: var(--label);
}

.command svg {
  color: var(--icon);
}

.ribbon-scroll {
  width: 28px;
  background: #f5f5f5;
}

/* formula bar */
.formula-bar {
  display: flex;
  align-items: center;
  height: 52px;
  background: #fff;
}

.name-box {
  display: flex;
  align-items: center;
  width: 172px;
  height: 52px;
  padding: 0 9px 0 18px;
  box-sizing: border-box;
  border: 2px solid #cbcbcb;
  border-width: 2px 3px 0 2px;
}

.name-box input {
  flex: 1;
  padding: 0;
  font-size: 25px;
  color: #262626;
}

.stepper {
  display: flex;
  flex-direction: column;
  gap: 12px;
  color: #999;
}

.formula-btn {
  width: 28px;
  margin-left: 26px;
}

.formula-btn + .formula-btn {
  margin-left: 30px;
}

.fx {
  width: 50px;
  margin-left: 23px;
  font-family: "Liberation Serif", serif;
  font-size: 34px;
  font-style: italic;
  line-height: 40px;
  color: #404040;
}

.formula-input {
  flex: 1;
  height: 42px;
  border-left: 2px solid #e2e2e2;
  font-size: 22px;
}

.expand {
  width: 30px;
  color: #6a6a6a;
}

/* sheet */
.sheet {
  position: relative;
  flex: 1;
  min-height: 0;
  overflow: hidden;
  border-top: 6px double #a3a3a3;
  border-bottom: 2px solid #c9c9c9;
  font-family: Lato, sans-serif;
  font-variant-ligatures: none;
}

.grid {
  width: 1478px;
  table-layout: fixed;
  border-spacing: 0;
}

.row-head-col {
  width: 46px;
}

.grid th,
.grid td {
  height: 32px;
  padding: 2px 0 0;
  box-sizing: border-box;
  border-right: 2px solid #d2d2d2;
  border-bottom: 2px solid #d2d2d2;
  font-size: 21px;
  line-height: 26px;
  text-align: center;
  white-space: nowrap;
  overflow: hidden;
}

.grid td.text {
  padding-left: 4px;
  font-size: 22px;
  text-align: left;
}

.grid th {
  font-weight: 400;
  color: #5c5c5c;
  background: linear-gradient(90deg, #f7f7f7, #fff);
}

.grid tbody th {
  border-right-color: #bababa;
}

.grid thead th {
  height: 44px;
  border-right-color: #e2e2e2;
  border-bottom-color: #b6b6b6;
  background: linear-gradient(#fff, #f6f6f6);
}

.grid thead .corner {
  padding-left: 10px;
  border-right-color: #b6b6b6;
}

.chart {
  position: absolute;
  top: 429px;
  left: 325px;
  margin: 0;
  box-sizing: border-box;
  outline: 2px solid #d9d9d9;
  outline-offset: -1px;
  background: #fff;
}

/* sheet tabs */
.sheet-tabs {
  display: flex;
  align-items: flex-start;
  height: 50px;
  background: linear-gradient(#e6e6e6, #efefef 12px);
}

.sheet-arrow {
  width: 14px;
  height: 50px;
  margin-left: 30px;
}

.sheet-arrow + .sheet-arrow {
  margin-left: 32px;
}

.sheet-tab {
  width: 160px;
  height: 46px;
  margin: -2px 0 0 30px;
  padding: 5px 2px 0 0;
  border: 2px solid #c6c6c6;
  border-top: none;
  border-radius: 0 0 8px 8px;
  background: #fff;
  box-shadow: 0 2px 2px rgba(0, 0, 0, 0.2);
  color: #3f8256;
  font-size: 23px;
  font-weight: 700;
  position: relative;
}

.add-sheet {
  width: 76px;
  height: 41px;
  padding: 4px 0 0;
  border-right: 2px solid #d0d0d0;
}

/* status bar */
.statusbar {
  display: flex;
  align-items: center;
  gap: 40px;
  height: 46px;
  padding: 0 48px;
  box-sizing: border-box;
  border-top: 2px solid #9c9c9c;
  background: linear-gradient(#e4e4e4, #d7d7d7);
  font-size: 24px;
  color: #4e4e4e;
}

.status-right {
  display: flex;
  align-items: center;
  height: 44px;
  margin-left: auto;
}

.view {
  width: 72px;
  height: 44px;
  color: #666;
}

.view.active {
  width: 74px;
  background: #a5a5a5;
  color: #fff;
}

.focus {
  gap: 12px;
  margin-right: 22px;
}

.zoom-btn {
  width: 44px;
  height: 44px;
  color: #666;
}

.slider {
  width: 200px;
  height: 32px;
  margin: 0;
  appearance: none;
  background: none;
}

.slider::-webkit-slider-runnable-track {
  height: 8px;
  border-radius: 4px;
  background: #9b9b9b;
}

.slider::-webkit-slider-thumb {
  width: 32px;
  height: 32px;
  margin-top: -12px;
  appearance: none;
  border-radius: 50%;
  background: #fff;
  box-shadow: 0 1px 3px rgba(0, 0, 0, 0.35);
}

output {
  margin-left: 20px;
}

/* divider between windows */
.splitter {
  display: flex;
  align-items: center;
  justify-content: center;
  background: #000;
}

.handle {
  width: 8px;
  height: 128px;
  border-radius: 4px;
  background: #8e8e8e;
}

/* document */
.canvas {
  flex: 1;
  min-height: 0;
  padding-left: 35px;
  overflow: hidden;
  background: #ebebeb;
}

.page {
  height: 100%;
  padding: 151px 40px 0 169px;
  box-sizing: border-box;
  border-left: 2px solid #c6c6c6;
  background: #fff;
  color: #000;
  font-family: "Liberation Serif", "Times New Roman", serif;
  font-size: 29px;
  line-height: 34px;
}

.page p {
  max-width: 1124px;
  margin: 0 0 65px;
}

.page p:nth-child(3) {
  margin-bottom: 96px;
}
</style>
